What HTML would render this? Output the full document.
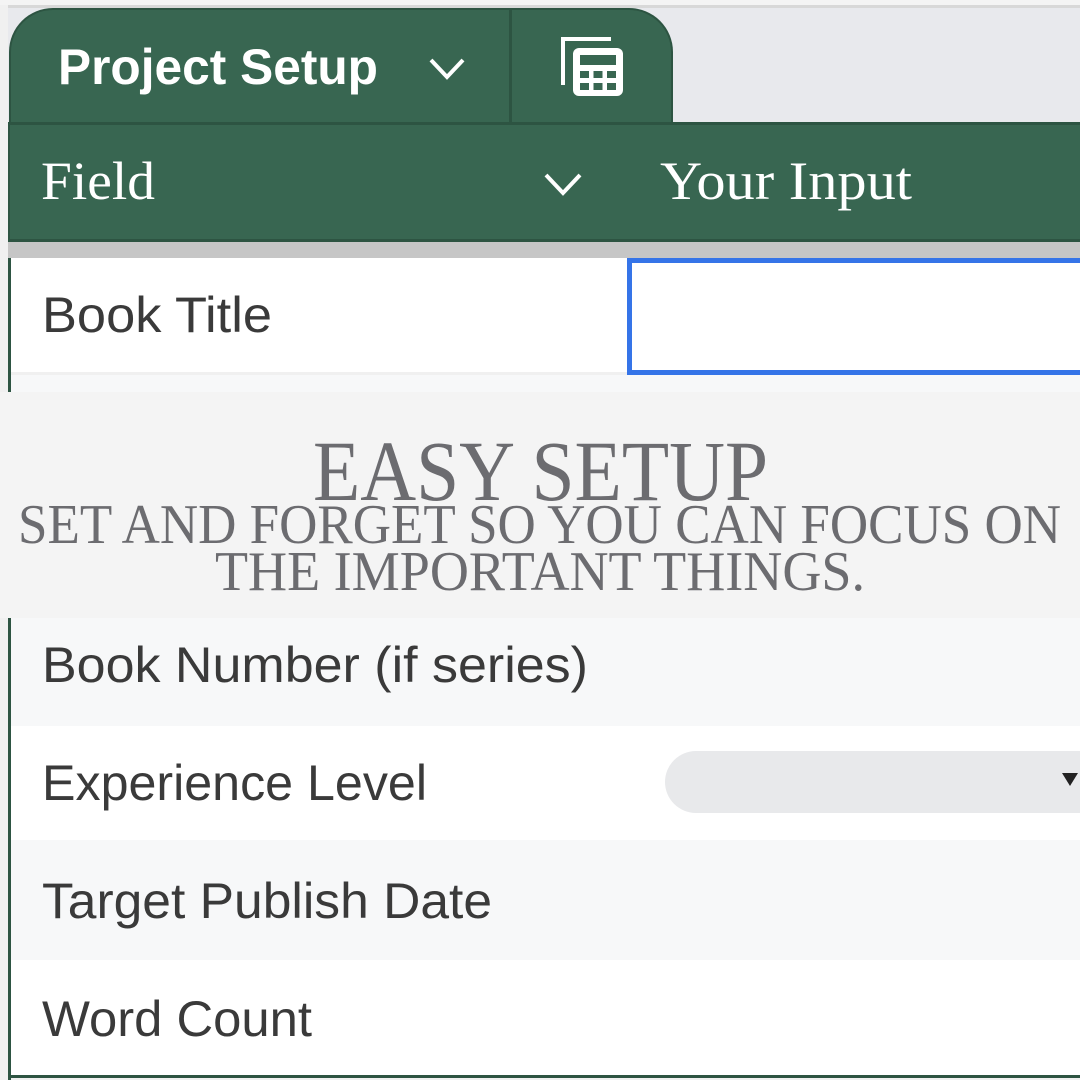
<!DOCTYPE html>
<html><head><meta charset="utf-8"><style>
*{margin:0;padding:0;box-sizing:border-box}
body{width:1080px;height:1080px;overflow:hidden;background:#f0f0f0;position:relative;font-family:"Liberation Sans",sans-serif}
.a{position:absolute}
.row{position:absolute;left:10px;right:0;}
</style></head><body>
<div class="a" style="left:0;top:0;width:1080px;height:5px;background:#f4f4f4"></div>
<div class="a" style="left:8px;top:5px;width:1072px;height:3px;background:#d8d8d8"></div>
<div class="a" style="left:8px;top:8px;width:1072px;height:116px;background:#e8e9ed"></div>
<!-- tab -->
<div class="a" style="left:9px;top:8px;width:664px;height:118px;background:#386651;border:2px solid #2d5442;border-bottom:none;border-radius:44px 44px 0 0"></div>
<div class="a" style="left:509px;top:10px;width:3px;height:114px;background:#2d5442"></div>
<svg class="a" style="left:428px;top:55px" width="40" height="30"><path d="M3 5 L19 22 L35 5" stroke="#fff" stroke-width="4" fill="none"/></svg>
<svg class="a" style="left:555px;top:34px" width="75" height="70">
<path d="M8 51 V5 H56" stroke="#fff" stroke-width="4" fill="none"/>
<rect x="18" y="14" width="50" height="48" rx="6" fill="#fff"/>
<rect x="25" y="21" width="36" height="10" fill="#386651"/>
<rect x="25" y="37" width="9" height="7" fill="#386651"/><rect x="38.5" y="37" width="9" height="7" fill="#386651"/><rect x="52" y="37" width="9" height="7" fill="#386651"/>
<rect x="25" y="49" width="9" height="7" fill="#386651"/><rect x="38.5" y="49" width="9" height="7" fill="#386651"/><rect x="52" y="49" width="9" height="7" fill="#386651"/>
</svg>
<!-- header -->
<div class="a" style="left:8px;top:122px;width:1072px;height:120px;background:#386651;border-top:3px solid #2d5442;border-bottom:3px solid #2d5442;border-left:2px solid #2d5442"></div>
<svg class="a" style="left:543px;top:170px" width="42" height="30"><path d="M3 5 L20 23 L37 5" stroke="#fff" stroke-width="4" fill="none"/></svg>
<div class="a" style="left:8px;top:242px;width:1072px;height:16px;background:#c6c6c6"></div>
<!-- rows -->
<div class="a" style="left:8px;top:258px;width:3px;height:822px;background:#2d5442"></div>
<div class="row" style="top:258px;height:114px;left:11px;background:#fff"></div>
<div class="a" style="left:627px;top:258px;width:460px;height:117px;border:5px solid #3574e8;background:#fff"></div>
<div class="row" style="top:375px;height:20px;left:11px;background:#f7f8f9"></div>
<div class="row" style="top:618px;height:108px;left:11px;background:#f7f8f9"></div>
<div class="row" style="top:726px;height:114px;left:11px;background:#fff"></div>
<div class="a" style="left:665px;top:751px;width:460px;height:62px;border-radius:31px;background:#e8e9eb"></div>
<svg class="a" style="left:1060px;top:770px" width="20" height="20"><path d="M2 3 L18 3 L10 16 Z" fill="#222"/></svg>
<div class="row" style="top:840px;height:120px;left:11px;background:#f7f8f9"></div>
<div class="row" style="top:960px;height:115px;left:11px;background:#fff"></div>
<div class="a" style="left:8px;top:1075px;width:1072px;height:3px;background:#2d5442"></div>
<svg class="a" style="left:0;top:0" width="1080" height="1080">
<text x="58" y="84" textLength="320" lengthAdjust="spacingAndGlyphs" font-family="Liberation Sans" font-weight="bold" font-size="50" fill="#fff">Project Setup</text>
<text x="41" y="199" textLength="114" lengthAdjust="spacingAndGlyphs" font-family="Liberation Serif" font-size="54" fill="#fff">Field</text>
<text x="660" y="199" textLength="252" lengthAdjust="spacingAndGlyphs" font-family="Liberation Serif" font-size="54" fill="#fff">Your Input</text>
<g font-family="Liberation Sans" font-size="50" fill="#3a3a3a">
<text x="42" y="332" textLength="230" lengthAdjust="spacingAndGlyphs">Book Title</text>
<text x="42" y="682" textLength="546" lengthAdjust="spacingAndGlyphs">Book Number (if series)</text>
<text x="42" y="800" textLength="385" lengthAdjust="spacingAndGlyphs">Experience Level</text>
<text x="42" y="918" textLength="450" lengthAdjust="spacingAndGlyphs">Target Publish Date</text>
<text x="42" y="1036" textLength="270" lengthAdjust="spacingAndGlyphs">Word Count</text>
</g>
</svg>
<!-- overlay -->
<div class="a" style="left:0;top:392px;width:1080px;height:226px;background:#f4f4f4"></div>
<svg class="a" style="left:0;top:392px" width="1080" height="226">
<text x="313" y="108" textLength="455" lengthAdjust="spacingAndGlyphs" font-family="Liberation Serif" font-size="86" fill="#6c6c70">EASY SETUP</text>
<text x="18" y="151" textLength="1043" lengthAdjust="spacingAndGlyphs" font-family="Liberation Serif" font-size="56" fill="#6c6c70">SET AND FORGET SO YOU CAN FOCUS ON</text>
<text x="215" y="198" textLength="650" lengthAdjust="spacingAndGlyphs" font-family="Liberation Serif" font-size="56" fill="#6c6c70">THE IMPORTANT THINGS.</text>
</svg>
</body></html>
